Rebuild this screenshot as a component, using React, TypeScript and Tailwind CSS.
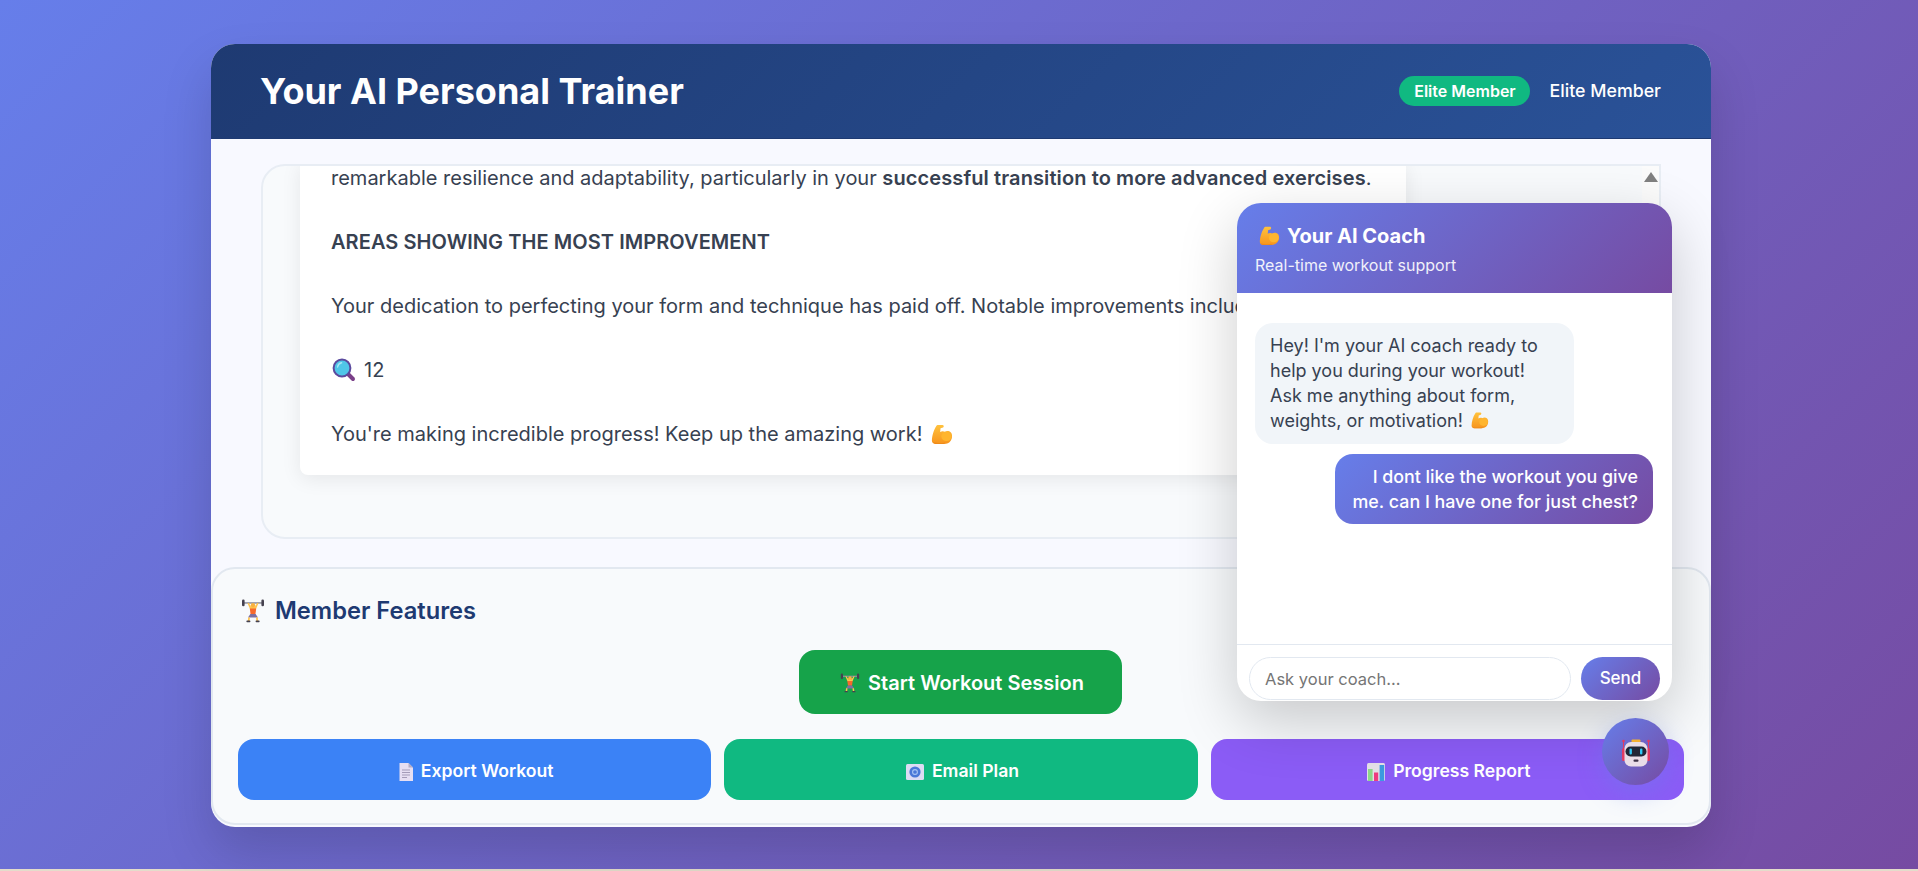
const font = { fontFamily: "Inter, 'Liberation Sans', sans-serif" };

function Muscle({ className }: { className: string }) {
  return (
    <svg viewBox="0 0 24 24" className={className}>
      <defs>
        <linearGradient id="muscleFill" x1="0" y1="0" x2="0" y2="1">
          <stop offset="0" stopColor="#ffc23d" />
          <stop offset="1" stopColor="#f7941d" />
        </linearGradient>
      </defs>
      <path
        d="M8 2 L13 2 C14.5 2 14.8 4 13.6 4.8 L11 5.6 L10.6 9.5 C12 8.4 14 8.3 15.6 9.2 C17 8 20 8 21.6 9.6 C23.6 11.6 23.4 16 21.6 18.4 C20.2 20.6 17.6 21.8 14.6 21.8 L6 21.8 C3.4 21.8 2 20.4 2 18.6 C2 13.6 4 7 6.6 3.2 C7 2.5 7.4 2 8 2 Z"
        fill="url(#muscleFill)"
      />
      <ellipse cx="17.2" cy="14" rx="5.4" ry="4.8" fill="#ffb52e" />
      <path d="M3 19.8 C6 21 12 21.4 16 20.4 L14.6 21.8 L6 21.8 C4.4 21.8 3.4 21 3 19.8 Z" fill="#ee8a1a" />
    </svg>
  );
}

function Lifter({ className }: { className: string }) {
  return (
    <svg viewBox="0 0 24 24" className={className}>
      <rect x="3" y="3.2" width="18" height="1.5" fill="#8d8d9a" />
      <rect x="1" y="0.6" width="2.6" height="6.6" rx="1.2" fill="#45414f" />
      <rect x="20.4" y="0.6" width="2.6" height="6.6" rx="1.2" fill="#45414f" />
      <path d="M6.4 4 L9 10 L15 10 L17.6 4 L16.2 4 L14 7.6 L10 7.6 L7.8 4 Z" fill="#ffc34d" />
      <circle cx="12" cy="6.2" r="2.2" fill="#f9b13f" />
      <path d="M8.8 9.6 L15.2 9.6 L14.4 15.4 L9.6 15.4 Z" fill="#f8692c" />
      <path d="M9.4 15 L14.6 15 L17 18.6 L7 18.6 Z" fill="#7d6fa0" />
      <path d="M7.2 18.4 L9 18.4 L8.6 22 L6.8 22 Z" fill="#ffc34d" />
      <path d="M15 18.4 L16.8 18.4 L17.2 22 L15.4 22 Z" fill="#ffc34d" />
      <rect x="5.4" y="21.6" width="4" height="1.6" rx="0.7" fill="#45414f" />
      <rect x="14.6" y="21.6" width="4" height="1.6" rx="0.7" fill="#45414f" />
    </svg>
  );
}

function Magnifier() {
  return (
    <svg viewBox="0 0 24 24" className="w-[24px] h-[24px]">
      <path d="M14.5 14.5 L21 21" stroke="#7a3f88" strokeWidth="4" strokeLinecap="round" />
      <circle cx="10" cy="10" r="8.4" fill="#4fc6e8" stroke="#5b4a9e" strokeWidth="2" />
      <path d="M5.6 9 C6 6.6 7.6 5.2 9.6 4.8" stroke="#a7e6f6" strokeWidth="1.4" fill="none" strokeLinecap="round" />
    </svg>
  );
}

function DocIcon() {
  return (
    <svg viewBox="0 0 14 18" className="w-[14px] h-[18px]">
      <path d="M0.5 0 L9.5 0 L14 4.5 L14 18 L0.5 18 Z" fill="#e6def2" />
      <path d="M9.5 0 L14 4.5 L9.5 4.5 Z" fill="#b3abc4" />
      <path d="M3 7 H11 M3 9.5 H11 M3 12 H11 M3 14.5 H8" stroke="#a49bb8" strokeWidth="1" />
    </svg>
  );
}

function MailIcon() {
  return (
    <svg viewBox="0 0 18 16" className="w-[18px] h-[16px]">
      <rect x="0" y="0" width="18" height="16" rx="1.5" fill="#dcdcf4" />
      <circle cx="9" cy="8" r="5.6" fill="#4a78d8" />
      <circle cx="9" cy="8" r="2.4" fill="none" stroke="#a8c4f4" strokeWidth="1.1" />
    </svg>
  );
}

function ChartIcon() {
  return (
    <svg viewBox="0 0 18 18" className="w-[18px] h-[18px]">
      <rect x="0" y="0" width="18" height="18" rx="1.5" fill="#e4e0e8" />
      <rect x="1" y="6" width="4.6" height="12" fill="#8ed88a" />
      <rect x="7" y="9.5" width="4.2" height="8.5" fill="#ee3d80" />
      <rect x="12.6" y="2" width="4.6" height="16" fill="#3d9be0" />
    </svg>
  );
}

function RobotIcon() {
  return (
    <svg viewBox="0 0 28 28" className="w-[28px] h-[28px]">
      <path d="M1.5 3 V15 M26.5 3 V15" stroke="#e23a63" strokeWidth="1" />
      <circle cx="1.5" cy="2" r="1.3" fill="#e23a63" />
      <circle cx="26.5" cy="2" r="1.3" fill="#e23a63" />
      <rect x="0" y="9" width="3.4" height="13" rx="1.5" fill="#e23a63" />
      <rect x="24.6" y="9" width="3.4" height="13" rx="1.5" fill="#e23a63" />
      <rect x="9.5" y="0.5" width="9" height="3" rx="1" fill="#f5b133" />
      <rect x="2.5" y="3" width="23" height="24.5" rx="6.5" fill="#e9dde8" />
      <rect x="3.5" y="7.5" width="21" height="10" rx="5" fill="#222637" />
      <rect x="7.5" y="9.5" width="2.4" height="6" rx="1.1" fill="#2fc8f5" />
      <rect x="18" y="9.5" width="2.4" height="6" rx="1.1" fill="#2fc8f5" />
      <rect x="11.5" y="20.5" width="5" height="2.2" rx="1" fill="#3c3146" />
    </svg>
  );
}

function ActionButton({
  color,
  icon,
  label,
}: {
  color: string;
  icon: React.ReactNode;
  label: string;
}) {
  return (
    <button
      className={`${color} h-[61px] rounded-[16px] pt-[4px] pl-[3px] flex items-center justify-center gap-[8px] text-white text-[17.6px] font-semibold`}
    >
      {icon}
      {label}
    </button>
  );
}

export default function App() {
  return (
    <div className="h-[871px] overflow-hidden bg-[#e4dccb]" style={font}>
      <div className="h-[869px] pt-[44px] bg-[linear-gradient(135deg,#667eea_0%,#764ba2_100%)]">
        <div className="relative ml-[211px] w-[1500px] h-[783px] rounded-[24px] bg-[#f8f9ff] shadow-[0_25px_50px_rgba(0,0,0,0.15)]">
          <header className="h-[95px] rounded-t-[24px] pl-[49px] pr-[50px] flex items-center justify-between bg-[linear-gradient(135deg,#1e3a72_0%,#2a5298_100%)] border-b border-[#1e3a72]">
            <h1 className="text-[36px] font-bold text-white">Your AI Personal Trainer</h1>
            <div className="flex items-center gap-[19px]">
              <span className="h-[30px] w-[131px] flex items-center justify-center rounded-full bg-[#10b981] text-white text-[16px] font-semibold">
                Elite Member
              </span>
              <span className="text-white text-[17.8px] font-medium">Elite Member</span>
            </div>
          </header>

          <div className="px-[50px] pt-[25px]">
            <div className="relative h-[375px] overflow-hidden rounded-[24px] rounded-tr-none border-2 border-[#e8edf4] bg-[#f8fafc] pl-[37px]">
              <div className="w-[1106px] h-[313px] rounded-b-[8px] bg-white px-[31px] shadow-[0_4px_20px_rgba(0,0,0,0.08)] text-[20px] leading-[32px] text-[#374151]">
                <p className="whitespace-nowrap -mt-[4px]">
                  remarkable resilience and adaptability, particularly in your{" "}
                  <strong className="font-semibold tracking-[0.1px]">successful transition to more advanced exercises</strong>.
                </p>
                <p className="mt-[32px] font-semibold tracking-[0.07px]">AREAS SHOWING THE MOST IMPROVEMENT</p>
                <p className="mt-[32px] whitespace-nowrap">
                  Your dedication to perfecting your form and technique has paid off. Notable improvements include:
                </p>
                <p className="mt-[32px] pl-[1px] flex items-center gap-[8px]">
                  <Magnifier />
                  12
                </p>
                <p className="mt-[32px] flex items-center gap-[8px]">
                  You're making incredible progress! Keep up the amazing work! <Muscle className="w-[23px] h-[23px]" />
                </p>
              </div>
              <div className="absolute top-0 right-0 bottom-0 w-[17px] bg-[#fbfbfb] flex justify-center pt-[6px]">
                <div className="w-0 h-0 border-x-[7px] border-x-transparent border-b-[10px] border-b-[#808080]" />
              </div>
            </div>
          </div>

          <section className="mt-[28px] h-[258px] rounded-[24px] border-2 border-[#e2e8f0] bg-[#f8fafc] px-[25px] pt-[24px]">
            <h2 className="flex items-center gap-[10px] pl-[3px] text-[23.7px] leading-[36px] font-semibold text-[#1e3a72]">
              <Lifter className="w-[24px] h-[24px]" />
              Member Features
            </h2>
            <div className="mt-[21px] flex justify-center">
              <button className="-ml-[2px] w-[323px] h-[64px] rounded-[16px] bg-[#16a34a] pt-[1px] pl-[4px] flex items-center justify-center gap-[8px] text-white text-[20px] font-semibold">
                <Lifter className="w-[20px] h-[20px]" />
                Start Workout Session
              </button>
            </div>
            <div className="mt-[25px] grid grid-cols-3 gap-[13px]">
              <ActionButton color="bg-[#3b82f6]" icon={<DocIcon />} label="Export Workout" />
              <ActionButton color="bg-[#10b981]" icon={<MailIcon />} label="Email Plan" />
              <ActionButton color="bg-[#8b5cf6]" icon={<ChartIcon />} label="Progress Report" />
            </div>
          </section>

          {/* floating coach panel */}
          <div className="absolute left-[1026px] top-[159px] w-[435px] h-[498px] overflow-hidden rounded-[24px] bg-white shadow-[0_20px_60px_rgba(0,0,0,0.2)] flex flex-col">
            <div className="h-[90px] shrink-0 px-[18px] pt-[19px] text-white bg-[linear-gradient(135deg,#667eea_0%,#764ba2_100%)]">
              <div className="flex items-center gap-[7px] pl-[3px] text-[20px] leading-[28px] font-bold">
                <Muscle className="w-[22px] h-[22px]" />
                Your AI Coach
              </div>
              <div className="mt-[5px] text-[16px] leading-[20px] opacity-90">Real-time workout support</div>
            </div>
            <div className="flex-1 pl-[18px] pr-[19px] pt-[30px] flex flex-col gap-[10px]">
              <div className="w-[319px] h-[121px] rounded-[18px] bg-[#f1f5f9] pl-[15px] pt-[10px] whitespace-nowrap text-[18px] leading-[25px] text-[#374151]">
                Hey! I'm your AI coach ready to
                <br />
                help you during your workout!
                <br />
                Ask me anything about form,
                <br />
                weights, or motivation! <Muscle className="inline-block w-[19px] h-[19px] ml-[2px] align-[-3px]" />
              </div>
              <div className="self-end w-[318px] h-[70px] rounded-[18px] px-[15px] pt-[10px] text-right text-[17.85px] leading-[25px] text-white font-medium bg-[linear-gradient(135deg,#667eea_0%,#764ba2_100%)]">
                I dont like the workout you give me. can I have one for just chest?
              </div>
            </div>
            <div className="h-[57px] shrink-0 border-t border-[#e2e8f0] pl-[12px] pr-[12px] pt-[12px] flex gap-[10px]">
              <input
                placeholder="Ask your coach..."
                className="w-[322px] h-[43px] rounded-full border border-[#e2e8f0] px-[15px] text-[16.5px] outline-none placeholder:text-[#757575]"
              />
              <button className="w-[79px] h-[43px] pt-[1px] rounded-full text-white text-[17px] font-medium bg-[linear-gradient(135deg,#667eea_0%,#764ba2_100%)]">
                Send
              </button>
            </div>
          </div>

          <button className="absolute left-[1391px] top-[674px] w-[67px] h-[67px] pt-[2px] rounded-full flex items-center justify-center bg-[linear-gradient(135deg,#667eea_0%,#764ba2_100%)] shadow-[0_8px_25px_rgba(102,126,234,0.4)]">
            <RobotIcon />
          </button>
        </div>
      </div>
    </div>
  );
}
